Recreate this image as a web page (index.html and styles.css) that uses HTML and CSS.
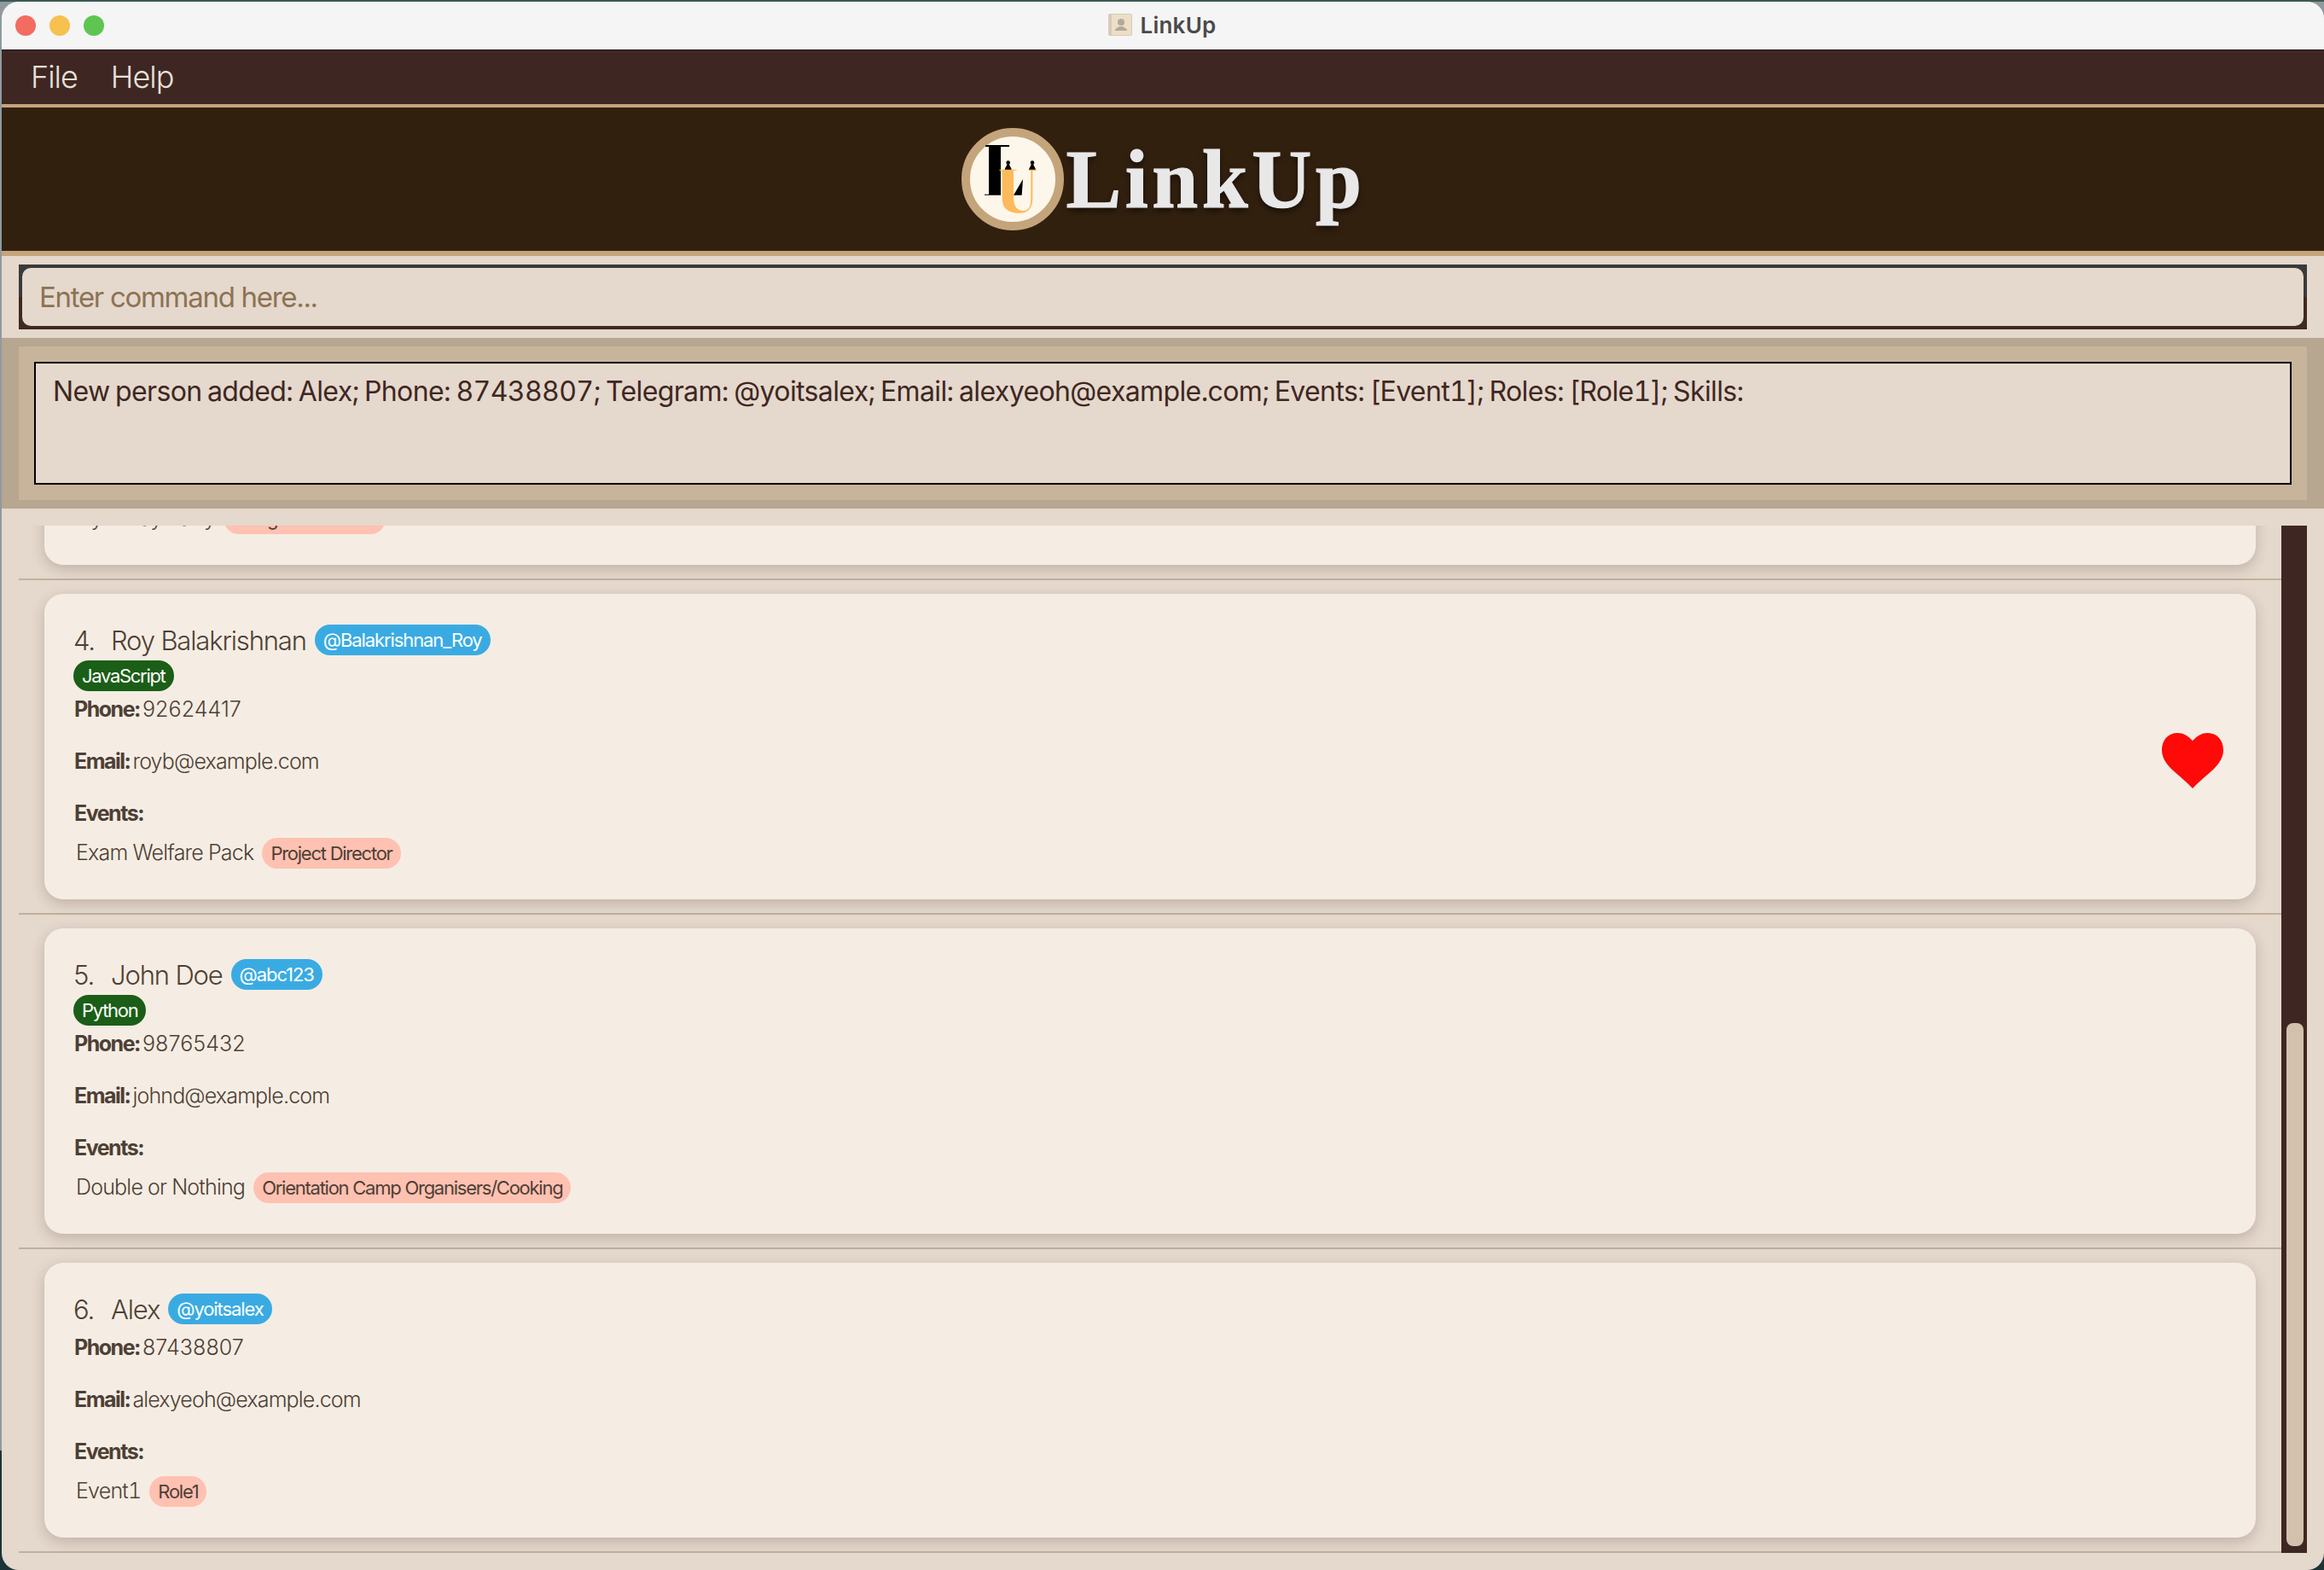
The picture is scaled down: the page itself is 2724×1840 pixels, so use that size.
FILE: index.html
```html
<!DOCTYPE html>
<html lang="en">
<head>
<meta charset="utf-8">
<title>LinkUp</title>
<link rel="stylesheet" href="styles.css">
</head>
<body>
<div class="window">
  <header class="titlebar">
    <div class="lights"><span class="light red"></span><span class="light yellow"></span><span class="light green"></span></div>
    <div class="title">
      <svg class="title-icon" viewBox="0 0 28 26" aria-hidden="true">
        <rect x="0" y="0" width="28" height="26" rx="2" fill="#d6cbb9"/>
        <rect x="4" y="1" width="23" height="24" fill="#ecdfc6"/>
        <circle cx="15" cy="10" r="4" fill="#b3a999"/>
        <path d="M8 20c0-3 4-4 5-5h4c1 1 5 2 5 5z" fill="#b3a999"/>
      </svg>
      <span>LinkUp</span>
    </div>
  </header>
  <nav class="menubar"><span>File</span><span>Help</span></nav>
  <div class="brand">
    <svg class="logo" viewBox="54 60 360 360" aria-hidden="true">
      <circle cx="234" cy="240" r="165" fill="#fdf6ea" stroke="#c4a57b" stroke-width="30"/>
      <path d="M138 120h84v6h-30v170h-57v-3h15V126h-12z" fill="#000"/>
      <path d="M237 296l33-56-4 56z" fill="#000"/>
      <circle cx="218" cy="182" r="7" fill="#000"/>
      <path d="M206 208c0-9 7-13 8-20h8c1 7 8 11 8 20z" fill="#000"/>
      <circle cx="303" cy="182" r="7" fill="#000"/>
      <path d="M291 208c0-9 7-13 8-20h8c1 7 8 11 8 20z" fill="#000"/>
      <path d="M187 206h61v3h-11v96c0 30 14 46 34 46 20 0 27-16 27-46v-96h-8v-3h28v3h-14v96c0 36-15 54-46 54-44 0-61-20-61-54v-96h-10z" fill="#fdba5a"/>
    </svg>
    <span class="wordmark">LinkUp</span>
  </div>
  <div class="command">
    <div class="command-frame"><input class="command-input" type="text" placeholder="Enter command here..."></div>
  </div>
  <section class="result">
    <div class="result-inner">
      <div class="result-box">New person added: Alex; Phone: 87438807; Telegram: @yoitsalex; Email: alexyeoh@example.com; Events: [Event1]; Roles: [Role1]; Skills:</div>
    </div>
  </section>
  <main class="list-area">
    <div class="list">
      <div class="list-scroll">
        <div class="cell">
          <article class="card">
            <div class="info">
              <div class="name-row"><span class="index">3.</span><span class="name">Charlotte Oliveiro</span><span class="pill handle">@charlotte</span></div>
              <div class="skill-row"><span class="pill skill">Design</span></div>
              <div class="field"><b>Phone:</b> <span class="num">93210283</span></div>
              <div class="field"><b>Email:</b> <span>charlotte@example.com</span></div>
              <div class="field events-label"><b>Events:</b></div>
              <div class="event-row"><span class="event">Gym Day Party</span><span class="pill role">Design Consultant</span></div>
            </div>
          </article>
        </div>
        <div class="cell">
          <article class="card">
            <div class="info">
              <div class="name-row"><span class="index">4.</span><span class="name">Roy Balakrishnan</span><span class="pill handle">@Balakrishnan_Roy</span></div>
              <div class="skill-row"><span class="pill skill">JavaScript</span></div>
              <div class="field"><b>Phone:</b> <span class="num">92624417</span></div>
              <div class="field"><b>Email:</b> <span>royb@example.com</span></div>
              <div class="field events-label"><b>Events:</b></div>
              <div class="event-row"><span class="event">Exam Welfare Pack</span><span class="pill role">Project Director</span></div>
            </div>
            <svg class="heart" viewBox="0 0 216 195" aria-hidden="true"><path d="M108 28C90 8 75 0 55 0 22 0 0 26 0 60c0 25 12 45 35 68 25 22 55 47 73 67 18-20 48-45 73-67 23-23 35-43 35-68 0-34-22-60-55-60-20 0-35 8-53 28z" fill="#ff0909"/></svg>
          </article>
        </div>
        <div class="cell">
          <article class="card">
            <div class="info">
              <div class="name-row"><span class="index">5.</span><span class="name">John Doe</span><span class="pill handle">@abc123</span></div>
              <div class="skill-row"><span class="pill skill">Python</span></div>
              <div class="field"><b>Phone:</b> <span class="num">98765432</span></div>
              <div class="field"><b>Email:</b> <span>johnd@example.com</span></div>
              <div class="field events-label"><b>Events:</b></div>
              <div class="event-row"><span class="event">Double or Nothing</span><span class="pill role">Orientation Camp Organisers/Cooking</span></div>
            </div>
          </article>
        </div>
        <div class="cell">
          <article class="card">
            <div class="info">
              <div class="name-row"><span class="index">6.</span><span class="name">Alex</span><span class="pill handle">@yoitsalex</span></div>
              <div class="field"><b>Phone:</b> <span class="num">87438807</span></div>
              <div class="field"><b>Email:</b> <span>alexyeoh@example.com</span></div>
              <div class="field events-label"><b>Events:</b></div>
              <div class="event-row"><span class="event">Event1</span><span class="pill role">Role1</span></div>
            </div>
          </article>
        </div>
      </div>
    </div>
    <div class="scrollbar"><div class="thumb"></div></div>
  </main>
</div>
</body>
</html>
```

FILE: styles.css
```css
* { box-sizing: border-box; }
html, body { margin: 0; height: 100%; }
body {
  width: 2724px;
  height: 1840px;
  overflow: hidden;
  padding: 2px 0 0 2px;
  background: linear-gradient(#3c5a50 0 2px, #8f9aa0 2px 1700px, #1d3338 1700px);
  font-family: Inter, "Noto Sans", sans-serif;
}
.window {
  width: 2722px;
  height: 1838px;
  display: flex;
  flex-direction: column;
  background: #e5d8cc;
  border-radius: 20px;
  overflow: hidden;
}
.titlebar {
  flex: 0 0 57px;
  position: relative;
  display: flex;
  align-items: center;
  justify-content: center;
  padding-bottom: 2px;
  background: #f5f5f5;
  border-bottom: 1px solid #1c0f0c;
}
.lights {
  position: absolute;
  left: 16px;
  top: 16px;
  display: flex;
  gap: 16px;
}
.light { width: 24px; height: 24px; border-radius: 50%; }
.red { background: #f26d60; }
.yellow { background: #f6c14f; }
.green { background: #5fc552; }
.title {
  display: flex;
  align-items: center;
  gap: 10px;
  margin-left: -2px;
  font-weight: 600;
  font-size: 26px;
  letter-spacing: 0.2px;
  color: #4a4a4a;
}
.title-icon { width: 28px; height: 26px; }
.menubar {
  flex: 0 0 63px;
  display: flex;
  align-items: center;
  gap: 39px;
  padding: 0 0 2px 34px;
  background: #3e2723;
  color: #e9e0d9;
  font-size: 36px;
  font-weight: 300;
  letter-spacing: -1px;
}
.brand {
  flex: 0 0 178px;
  display: flex;
  align-items: center;
  justify-content: center;
  gap: 2px;
  padding-left: 2px;
  background: #32200f;
  border-top: 4px solid #c4a57b;
  border-bottom: 6px solid #c4a57b;
}
.logo { width: 120px; height: 120px; }
.wordmark {
  font-family: "Liberation Serif", serif;
  font-weight: 700;
  font-size: 97px;
  letter-spacing: 4.6px;
  color: #e8e8e8;
  -webkit-text-stroke: 1.2px #e8e8e8;
  text-shadow: 0 4px 7px rgba(0, 0, 0, 0.6);
}
.command {
  flex: 0 0 96px;
  padding: 10px 20px;
  background: #e5d8cc;
}
.command-frame {
  height: 76px;
  padding: 4px;
  background: linear-gradient(#3a3a3a 0 50%, #3e2a20 50%);
}
.command-input {
  display: block;
  width: 100%;
  height: 100%;
  border: 0;
  outline: 0;
  border-radius: 10px;
  padding: 0 20px;
  background: #e5d8cc;
  font-family: Inter, sans-serif;
  font-size: 33px;
  letter-spacing: -1.3px;
  color: #3e2723;
}
.command-input::placeholder { color: #8b7355; opacity: 1; }
.result {
  flex: 0 0 200px;
  padding: 10px 20px;
  background: #b7a690;
}
.result-inner {
  height: 180px;
  padding: 18px;
  background: #c7b49a;
}
.result-box {
  height: 144px;
  padding: 13px 20px;
  border: 2px solid #000;
  background: #e5d8cc;
  font-size: 32px;
  line-height: 40px;
  letter-spacing: -0.62px;
  word-spacing: -1.5px;
  font-variant-numeric: tabular-nums;
  color: #3e2723;
}
.list-area {
  flex: 0 0 1204px;
  margin-top: 20px;
  padding: 0 20px;
  display: flex;
}
.list { flex: 1; overflow: hidden; }
.list-scroll { margin-top: -328px; }
.cell {
  padding: 16px 30px;
  border-bottom: 2px solid #c2b09e;
}
.card {
  display: flex;
  justify-content: space-between;
  padding: 36px 38px 36px 35px;
  background: #f5ede3;
  border-radius: 22px;
  box-shadow: 0 5px 16px rgba(62, 39, 35, 0.22);
}
.info { display: flex; flex-direction: column; align-items: flex-start; }
.name-row {
  height: 42px;
  display: flex;
  align-items: flex-start;
  color: #4e3f36;
}
.index, .name {
  margin-top: 1px;
  font-size: 31px;
  line-height: 36px;
  font-weight: 300;
  letter-spacing: -1.15px;
}
.index { width: 44px; margin-left: -1px; }
.name { margin-right: 10px; }
.pill {
  height: 36px;
  padding: 0 10px;
  display: inline-flex;
  align-items: center;
  border-radius: 18px;
  font-size: 22px;
}
.handle { background: #3aabe2; color: #fff; letter-spacing: -1.1px; }
.skill { background: #1b5e17; color: #fff; margin-left: -1px; letter-spacing: -1.3px; }
.skill-row { height: 36px; }
.field {
  height: 42px;
  margin-bottom: 19px;
  display: flex;
  align-items: center;
  gap: 3px;
  font-size: 25px;
  font-weight: 300;
  letter-spacing: -0.85px;
  color: #4e3f36;
}
.field b { font-weight: 700; letter-spacing: -1.5px; }
.field .num { letter-spacing: 0.1px; }
.events-label { margin-bottom: 8px; }
.event-row { display: flex; align-items: center; gap: 10px; color: #4e3f36; }
.event {
  margin: 0 0 2px 2px;
  font-size: 25px;
  font-weight: 300;
  letter-spacing: -0.8px;
  font-variant-numeric: tabular-nums;
}
.role { background: #ffc1b1; color: #4e3f36; letter-spacing: -1.25px; }
.heart { width: 72px; height: 65px; margin-top: 127px; }
.scrollbar {
  flex: 0 0 30px;
  height: 1204px;
  padding: 0 4px 8px 6px;
  display: flex;
  flex-direction: column;
  justify-content: flex-end;
  background: #3e2723;
}
.thumb { height: 613px; background: #d3c1ad; border-radius: 8px; }
```
